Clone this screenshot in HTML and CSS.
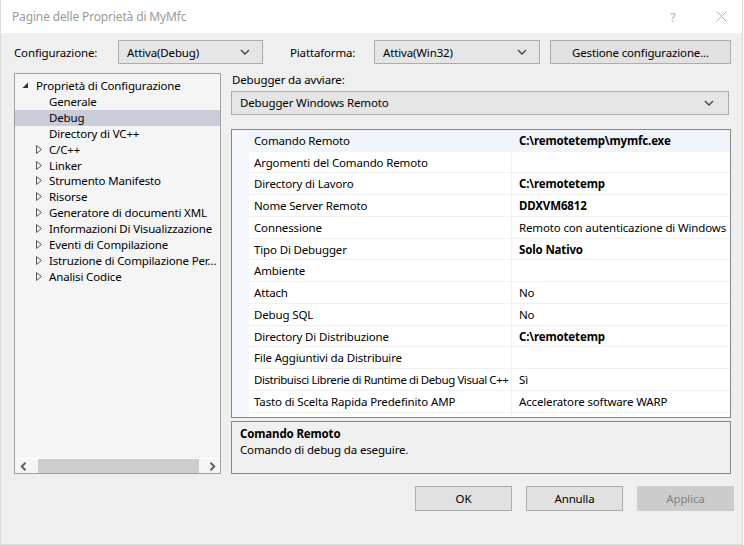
FILE: index.html
```html
<!DOCTYPE html>
<html lang="it">
<head>
<meta charset="utf-8">
<title>Pagine delle Proprietà di MyMfc</title>
<link rel="stylesheet" href="styles.css">
</head>
<body>
<div class="window">
  <div class="titlebar">
    <span class="title">Pagine delle Proprietà di MyMfc</span>
    <span class="tb-btn help">?</span>
    <span class="tb-btn close">
      <svg width="11" height="11" viewBox="0 0 11 11"><path d="M0.5 0.5 L10.5 10.5 M10.5 0.5 L0.5 10.5" stroke="#b5b5b5" stroke-width="1"/></svg>
    </span>
  </div>
  <div class="content">
    <div class="toprow">
      <span class="lbl lbl-config">Configurazione:</span>
      <div class="combo combo-config"><span>Attiva(Debug)</span><svg class="chev" width="10" height="6" viewBox="0 0 10 6"><path d="M1 1 L5 5 L9 1" fill="none" stroke="#444" stroke-width="1.4"/></svg></div>
      <span class="lbl lbl-plat">Piattaforma:</span>
      <div class="combo combo-plat"><span>Attiva(Win32)</span><svg class="chev" width="10" height="6" viewBox="0 0 10 6"><path d="M1 1 L5 5 L9 1" fill="none" stroke="#444" stroke-width="1.4"/></svg></div>
      <button class="btn btn-gest">Gestione configurazione...</button>
    </div>
    <div class="main">
      <div class="tree">
        <div class="tree-items">
          <div class="ti lvl0"><svg class="exp" width="7" height="7" viewBox="0 0 7 7"><path d="M6 0.5 L6 6 L0.5 6 Z" fill="#333"/></svg><span>Proprietà di Configurazione</span></div>
          <div class="ti lvl1"><span>Generale</span></div>
          <div class="ti lvl1 sel"><span>Debug</span></div>
          <div class="ti lvl1"><span>Directory di VC++</span></div>
          <div class="ti lvl1 col"><svg class="arr" width="6" height="9" viewBox="0 0 6 9"><path d="M0.5 0.5 L5.5 4.5 L0.5 8.5 Z" fill="none" stroke="#555" stroke-width="1"/></svg><span>C/C++</span></div>
          <div class="ti lvl1 col"><svg class="arr" width="6" height="9" viewBox="0 0 6 9"><path d="M0.5 0.5 L5.5 4.5 L0.5 8.5 Z" fill="none" stroke="#555" stroke-width="1"/></svg><span>Linker</span></div>
          <div class="ti lvl1 col"><svg class="arr" width="6" height="9" viewBox="0 0 6 9"><path d="M0.5 0.5 L5.5 4.5 L0.5 8.5 Z" fill="none" stroke="#555" stroke-width="1"/></svg><span>Strumento Manifesto</span></div>
          <div class="ti lvl1 col"><svg class="arr" width="6" height="9" viewBox="0 0 6 9"><path d="M0.5 0.5 L5.5 4.5 L0.5 8.5 Z" fill="none" stroke="#555" stroke-width="1"/></svg><span>Risorse</span></div>
          <div class="ti lvl1 col"><svg class="arr" width="6" height="9" viewBox="0 0 6 9"><path d="M0.5 0.5 L5.5 4.5 L0.5 8.5 Z" fill="none" stroke="#555" stroke-width="1"/></svg><span>Generatore di documenti XML</span></div>
          <div class="ti lvl1 col"><svg class="arr" width="6" height="9" viewBox="0 0 6 9"><path d="M0.5 0.5 L5.5 4.5 L0.5 8.5 Z" fill="none" stroke="#555" stroke-width="1"/></svg><span>Informazioni Di Visualizzazione</span></div>
          <div class="ti lvl1 col"><svg class="arr" width="6" height="9" viewBox="0 0 6 9"><path d="M0.5 0.5 L5.5 4.5 L0.5 8.5 Z" fill="none" stroke="#555" stroke-width="1"/></svg><span>Eventi di Compilazione</span></div>
          <div class="ti lvl1 col"><svg class="arr" width="6" height="9" viewBox="0 0 6 9"><path d="M0.5 0.5 L5.5 4.5 L0.5 8.5 Z" fill="none" stroke="#555" stroke-width="1"/></svg><span>Istruzione di Compilazione Per...</span></div>
          <div class="ti lvl1 col"><svg class="arr" width="6" height="9" viewBox="0 0 6 9"><path d="M0.5 0.5 L5.5 4.5 L0.5 8.5 Z" fill="none" stroke="#555" stroke-width="1"/></svg><span>Analisi Codice</span></div>
        </div>
        <div class="hscroll">
          <svg class="sarr" width="7" height="9" viewBox="0 0 7 9"><path d="M5.5 0.8 L1.8 4.5 L5.5 8.2" fill="none" stroke="#606060" stroke-width="2"/></svg>
          <div class="thumb"></div>
          <svg class="sarr" width="7" height="9" viewBox="0 0 7 9"><path d="M1.5 0.8 L5.2 4.5 L1.5 8.2" fill="none" stroke="#606060" stroke-width="2"/></svg>
        </div>
      </div>
      <div class="right">
        <div class="rlabel">Debugger da avviare:</div>
        <div class="combo combo-dbg"><span>Debugger Windows Remoto</span><svg class="chev" width="10" height="6" viewBox="0 0 10 6"><path d="M1 1 L5 5 L9 1" fill="none" stroke="#444" stroke-width="1.4"/></svg></div>
        <div class="grid">
          <div class="row selrow"><div class="name">Comando Remoto</div><div class="val b">C:\remotetemp\mymfc.exe</div></div>
          <div class="row"><div class="name">Argomenti del Comando Remoto</div><div class="val"></div></div>
          <div class="row"><div class="name">Directory di Lavoro</div><div class="val b">C:\remotetemp</div></div>
          <div class="row"><div class="name">Nome Server Remoto</div><div class="val b">DDXVM6812</div></div>
          <div class="row"><div class="name">Connessione</div><div class="val">Remoto con autenticazione di Windows</div></div>
          <div class="row"><div class="name">Tipo Di Debugger</div><div class="val b">Solo Nativo</div></div>
          <div class="row"><div class="name">Ambiente</div><div class="val"></div></div>
          <div class="row"><div class="name">Attach</div><div class="val">No</div></div>
          <div class="row"><div class="name">Debug SQL</div><div class="val">No</div></div>
          <div class="row"><div class="name">Directory Di Distribuzione</div><div class="val b">C:\remotetemp</div></div>
          <div class="row"><div class="name">File Aggiuntivi da Distribuire</div><div class="val"></div></div>
          <div class="row"><div class="name tight">Distribuisci Librerie di Runtime di Debug Visual C++</div><div class="val">Sì</div></div>
          <div class="row"><div class="name">Tasto di Scelta Rapida Predefinito AMP</div><div class="val">Acceleratore software WARP</div></div>
          <div class="row"><div class="name"></div><div class="val"></div></div>
        </div>
        <div class="desc">
          <div class="desc-title">Comando Remoto</div>
          <div class="desc-text">Comando di debug da eseguire.</div>
        </div>
      </div>
    </div>
    <div class="buttons">
      <button class="btn">OK</button>
      <button class="btn">Annulla</button>
      <button class="btn disabled">Applica</button>
    </div>
  </div>
</div>
</body>
</html>
```
FILE: styles.css
```css
* { box-sizing: border-box; }
html, body { margin: 0; padding: 0; }
body {
  background: #ffffff;
  font-family: "Noto Sans", "Open Sans", sans-serif;
  font-size: 11.5px;
  letter-spacing: -0.15px;
  color: #000;
}
.window {
  width: 743px;
  height: 545px;
  border-left: 1px solid #dcdcdc;
  border-right: 1px solid #dcdcdc;
  border-bottom: 1px solid #dcdcdc;
  display: flex;
  flex-direction: column;
}
.titlebar {
  height: 33px;
  background: #fff;
  display: flex;
  align-items: center;
  padding-left: 11px;
  flex-shrink: 0;
}
.title { color: #9a9a9a; flex: 1; font-size: 12px; }
.tb-btn { color: #b5b5b5; display: flex; align-items: center; }
.help { width: 46px; font-size: 13px; }
.close { width: 26px; }
.content {
  flex: 1;
  background: #efefef;
  padding: 7px 0 0 13px;
  display: flex;
  flex-direction: column;
}
.toprow {
  display: flex;
  align-items: center;
  height: 24px;
}
.lbl { display: block; }
.lbl-config { width: 104px; }
.lbl-plat { width: 84px; margin-left: 27px; }
.combo {
  height: 24px;
  background: #e5e5e5;
  border: 1px solid #acacac;
  display: flex;
  align-items: center;
  justify-content: space-between;
  padding: 0 12px 0 8px;
}
.combo-config { width: 145px; }
.combo-plat { width: 166px; }
.chev { display: block; flex-shrink: 0; }
.btn {
  font-family: inherit;
  font-size: 11.5px;
  letter-spacing: -0.15px;
  height: 24px;
  background: #e1e1e1;
  border: 1px solid #adadad;
  color: #000;
  padding: 0;
}
.btn-gest { width: 181px; margin-left: 10px; }
.main {
  display: flex;
  margin-top: 9px;
  height: 401px;
}
.tree {
  width: 207px;
  height: 401px;
  background: #f5f5f5;
  border: 1px solid #a0a0a0;
  display: flex;
  flex-direction: column;
  justify-content: space-between;
}
.tree-items { padding-top: 4px; }
.ti {
  height: 15.85px;
  display: flex;
  align-items: center;
  white-space: nowrap;
  overflow: hidden;
}
.ti svg { flex-shrink: 0; display: block; }
.lvl0 { padding-left: 7px; }
.lvl0 .exp { margin-right: 7px; }
.lvl1 { padding-left: 34px; }
.lvl1.col { padding-left: 21px; }
.lvl1.col .arr { margin-right: 7px; }
.sel { background: #cacdd9; }
.hscroll {
  height: 15px;
  border-top: 1px solid #fff;
  display: flex;
  align-items: center;
  padding: 0 4px 0 5px;
}
.thumb {
  height: 14px;
  background: #cdcdcd;
  flex: 1;
  margin: 0 10px 0 11px;
}
.sarr { display: block; flex-shrink: 0; }
.right {
  margin-left: 10px;
  width: 500px;
  display: flex;
  flex-direction: column;
}
.rlabel { height: 18px; line-height: 14px; padding-left: 1px; }
.combo-dbg { width: 498px; padding-left: 8px; padding-right: 14px; }
.grid {
  margin-top: 14px;
  width: 500px;
  height: 290px;
  border: 1px solid #828790;
  background: #f4f7fc;
  overflow: hidden;
}
.row {
  height: 21.75px;
  margin-left: 17px;
  display: flex;
  background: #fff;
  border-bottom: 1px solid #f0f0f0;
  align-items: center;
}
.row.selrow { background: #f0f4fb; border-bottom-color: #f0f4fb; }
.name {
  width: 263px;
  flex-shrink: 0;
  height: 100%;
  display: flex;
  align-items: center;
  padding-left: 5px;
  border-right: 1px solid #f0f0f0;
  white-space: nowrap;
  overflow: hidden;
}
.name.tight { letter-spacing: -0.42px; }
.val {
  flex: 1;
  padding-left: 7px;
  white-space: nowrap;
  overflow: hidden;
}
.selrow .name { border-right-color: #f0f4fb; }
.b { font-weight: bold; }
.desc {
  margin-top: 3px;
  width: 500px;
  height: 53px;
  border: 1px solid #828790;
  background: #f0f0f0;
  padding: 4px 8px;
}
.desc-title { font-weight: bold; line-height: 16px; }
.desc-text { line-height: 16px; }
.buttons {
  display: flex;
  justify-content: flex-end;
  gap: 14px;
  margin-top: 12px;
  padding-right: 8px;
}
.buttons .btn { width: 97px; height: 25px; }
.btn.disabled { background: #cccccc; border-color: #cccccc; color: #838383; }
```
